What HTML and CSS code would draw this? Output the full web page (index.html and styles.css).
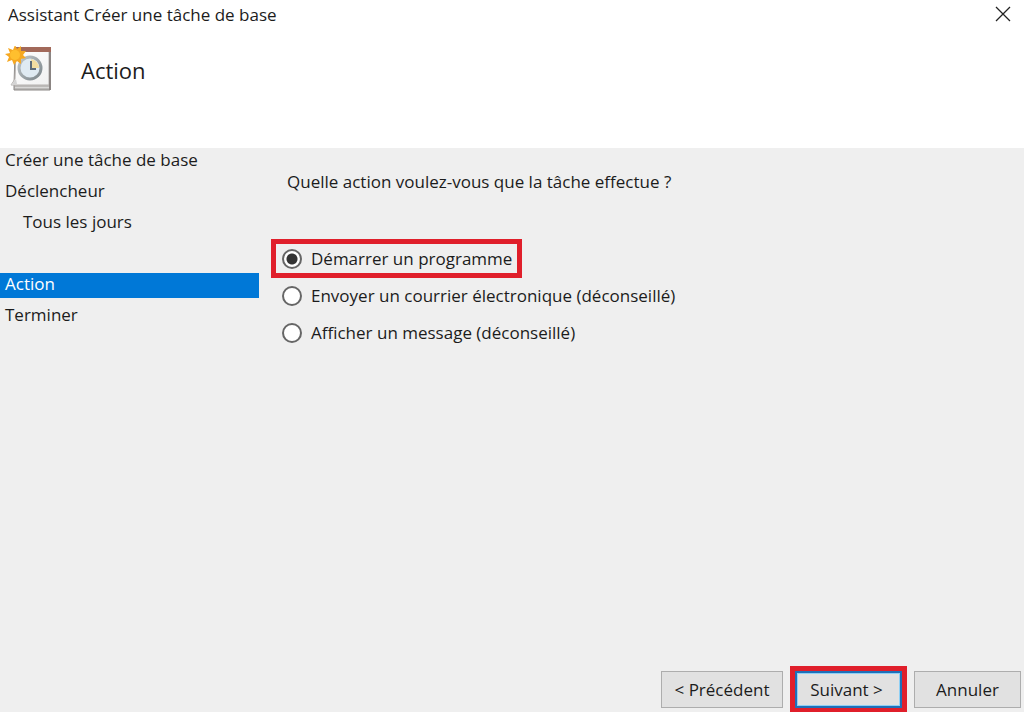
FILE: index.html
```html
<!DOCTYPE html>
<html lang="fr">
<head>
  <meta charset="UTF-8">
  <meta name="viewport" content="width=device-width, initial-scale=1.0">
  <title>Assistant Créer une tâche de base</title>
  <link rel="stylesheet" href="styles.css">
</head>
<body>
  <form class="wizard">
    <div class="titlebar">
      <span>Assistant Créer une tâche de base</span>
      <button type="button" class="close" aria-label="Fermer">
        <svg width="16" height="16" viewBox="0 0 16 16">
          <path d="M1 1 L15 15 M15 1 L1 15" stroke="#222" stroke-width="1.3" fill="none"/>
        </svg>
      </button>
    </div>

    <header class="header">
      <svg class="task-icon" width="48" height="48" viewBox="0 0 48 48">
        <defs>
          <linearGradient id="page" x1="0" y1="0" x2="1" y2="1">
            <stop offset="0" stop-color="#fff"/>
            <stop offset="1" stop-color="#f1f1f1"/>
          </linearGradient>
          <linearGradient id="ring" x1="0" y1="0" x2="1" y2="1">
            <stop offset="0" stop-color="#c0c6c9"/>
            <stop offset="1" stop-color="#7d878c"/>
          </linearGradient>
        </defs>
        <!-- calendrier -->
        <path d="M10 6 H45 V44 H9 V39 Z" fill="#bcbab8" stroke="#8b8886"/>
        <path d="M10 41.5 H44" stroke="#d9d8d7"/>
        <path d="M11 2 H44 V39 H6 L10 33 Z" fill="url(#page)" stroke="#b5b1af"/>
        <path d="M11 1 H46 V6 H11 Z" fill="#a2695a"/>
        <path d="M45 6 V44" stroke="#8b8583" stroke-width="2"/>
        <path d="M6 39 L11 33 L12 38 Z" fill="#d4d4d4"/>
        <!-- horloge -->
        <circle cx="25" cy="22" r="11" fill="#dfeaf2" stroke="url(#ring)" stroke-width="3"/>
        <path d="M26 22 V13 A9 9 0 0 1 34 22 Z" fill="#f1dca0"/>
        <path d="M26 15 V23 H31" fill="none" stroke="#5c6a77" stroke-width="2"/>
        <!-- soleil -->
        <path d="M10 -1 L12 3 L16 0 L16 5 L21 5 L18 9 L21 12 L16 13 L16 18 L12 15 L9 19 L7 14 L2 16 L4 11 L0 8 L5 7 L3 2 L8 4 Z" fill="#f6a821"/>
        <circle cx="10" cy="9" r="5" fill="#ffbf2e"/>
      </svg>
      <h1>Action</h1>
    </header>

    <div class="content">
      <ul class="steps">
        <li>Créer une tâche de base</li>
        <li>Déclencheur</li>
        <li class="sub">Tous les jours</li>
        <li></li>
        <li class="active">Action</li>
        <li>Terminer</li>
      </ul>

      <fieldset class="choices">
        <legend>Quelle action voulez-vous que la tâche effectue ?</legend>
        <label class="highlight"><input type="radio" name="action" checked> Démarrer un programme</label>
        <label><input type="radio" name="action"> Envoyer un courrier électronique (déconseillé)</label>
        <label><input type="radio" name="action"> Afficher un message (déconseillé)</label>
      </fieldset>
    </div>

    <footer class="footer">
      <button type="button" class="btn prev">&lt; Précédent</button>
      <button type="button" class="btn next highlight">Suivant &gt;</button>
      <button type="button" class="btn">Annuler</button>
    </footer>
  </form>
</body>
</html>
```
FILE: styles.css
```css
* {
  box-sizing: border-box;
}

body {
  margin: 0;
  font-family: "Segoe UI", "Open Sans", sans-serif;
  font-size: 17px;
  line-height: 25px;
  color: #1c1c1c;
  background-color: #fff;
}

.wizard {
  display: flex;
  flex-direction: column;
  min-height: 100vh;
}

.titlebar {
  display: flex;
  align-items: center;
  justify-content: space-between;
  height: 30px;
  padding: 0 13px 2px 8px;
}

.close {
  display: flex;
  padding: 0;
  border: none;
  background: none;
}

.header {
  display: flex;
  align-items: center;
  gap: 28px;
  height: 118px;
  padding: 0 5px 38px;
}

h1 {
  margin: 0;
  font-size: 22px;
  font-weight: normal;
}

.content {
  display: flex;
  flex: 1;
  background-color: #efefef;
}

.steps {
  display: flex;
  flex-direction: column;
  gap: 6px;
  width: 259px;
  margin: 0;
  padding: 1px 0 0;
  list-style: none;
}

.steps li {
  height: 25px;
  padding-left: 5px;
  line-height: 22px;
}

.steps .sub {
  padding-left: 23px;
}

.steps .active {
  background-color: #0078d7;
  color: #fff;
}

.choices {
  display: flex;
  flex: 1;
  flex-direction: column;
  align-items: flex-start;
  gap: 8px;
  margin: 0;
  padding: 0 17px;
  border: none;
}

legend {
  padding: 21px 11px 50px;
}

.choices label {
  display: flex;
  align-items: center;
  gap: 9px;
  height: 29px;
  padding: 0 5px 0 6px;
}

.choices input {
  appearance: none;
  width: 20px;
  height: 20px;
  margin: 0;
  border: 2px solid #666;
  border-radius: 50%;
  background-color: #fff;
}

.choices input:checked {
  background: radial-gradient(circle, #333 5px, #fff 6px);
}

.highlight {
  outline: 5px solid #e01f2b;
}

.footer {
  display: flex;
  justify-content: flex-end;
  gap: 12px;
  padding: 0 3px 4px;
  background-color: #efefef;
}

.btn {
  width: 107px;
  height: 37px;
  padding: 0;
  border: 1px solid #adadad;
  background-color: #e1e1e1;
  color: #1c1c1c;
  font: inherit;
}

.prev {
  width: 122px;
}

.next {
  padding-right: 4px;
  border: 2px solid #1f6fb8;
  box-shadow: inset 0 0 0 1px #8fd0f5;
}
```
